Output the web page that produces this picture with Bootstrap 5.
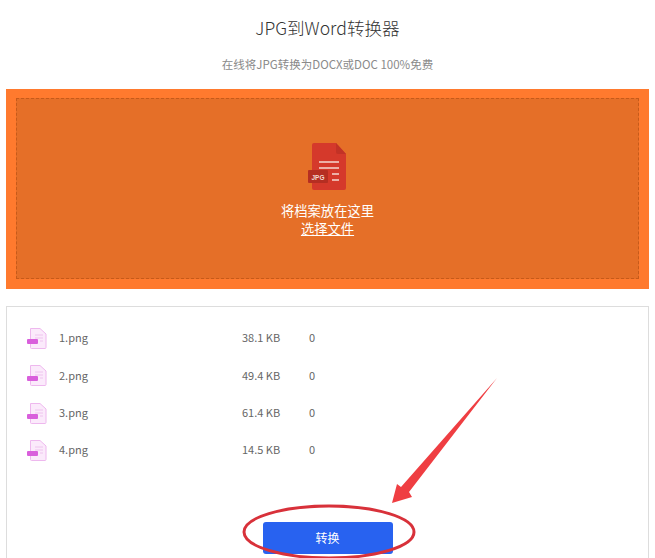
<!DOCTYPE html>
<html lang="zh-CN">
<head>
  <meta charset="UTF-8">
  <title>JPG到Word转换器</title>
  <link href="https://cdn.jsdelivr.net/npm/bootstrap@5.3.3/dist/css/bootstrap.min.css" rel="stylesheet">
  <style>
    html, body { height: 558px; overflow: hidden; }
    body { font-family: "Noto Sans CJK SC", "Noto Sans", sans-serif; background: #fff; color: #555; position: relative; }
    .page-wrap { padding: 0 6px; }
    .tool-title { font-size: 17.6px; line-height: 26px; font-weight: 300; color: #333; margin: 0; padding-top: 15px; }
    .tool-sub { font-size: 11.5px; line-height: 18px; color: #8a8a8a; margin: 0; padding-top: 14px; padding-bottom: 16px; }
    .drop-outer { background: #ff7a2e; height: 200px; padding: 9px 10px 10px; }
    .drop-inner { background: #e56f28; height: 100%; border: 1px dashed #c65a1a; color: #fff; padding-top: 43px; font-size: 13.3px; line-height: 18px; }
    .drop-inner svg { display: block; margin: 0 auto 10px; }
    .pick-file { color: #fff; text-decoration: underline; }
    .file-box { margin-top: 17px; border: 1px solid #ddd; border-bottom: 0; height: 252px; padding-top: 12px; }
    .file-row { height: 37.3px; font-size: 11px; padding-left: 20px; color: #666; }
    .f-icon { width: 32px; padding-top: 2px; }
    .f-name { width: 183px; }
    .f-size { width: 67px; }
    .go-btn { width: 130px; height: 32px; background: #2862f0; border: 0; border-radius: 3px; color: #fff; font-size: 12px; padding: 0; }
    .go-wrap { margin-top: 54px; }
    .mark-layer { position: absolute; left: 0; top: 0; pointer-events: none; }
  </style>
</head>
<body>
<div class="page-wrap">
  <div class="text-center">
    <h1 class="tool-title">JPG到Word转换器</h1>
    <p class="tool-sub">在线将JPG转换为DOCX或DOC 100%免费</p>
  </div>

  <div class="drop-outer">
    <div class="drop-inner text-center">
      <svg width="40" height="50" viewBox="0 0 40 50">
        <path d="M6 1H28L38 12V46Q38 48 36 48H6Q4 48 4 46V3Q4 1 6 1Z" fill="#d5392b"/>
        <path d="M28 1L38 12H30Q28 12 28 10Z" fill="#c23226"/>
        <rect x="0" y="28" width="20" height="13" rx="1" fill="#b52e22"/>
        <text x="10" y="38" font-size="6.5" font-weight="700" fill="#f3d9d0" text-anchor="middle" font-family="Liberation Sans, sans-serif">JPG</text>
        <path d="M11 20H31M11 26H31M24 32H31M24 38H31" stroke="#f5d8cf" stroke-width="1.3"/>
      </svg>
      <div>将档案放在这里</div>
      <div><a href="#" class="pick-file">选择文件</a></div>
    </div>
  </div>

  <div class="file-box">
    <div class="file-row d-flex align-items-center">
      <span class="f-icon"><svg width="20" height="21" viewBox="0 0 20 21"><path d="M3.5 .5H13L19 6V19.5Q19 20.5 18 20.5H4.500Q3.500 20.500 3.500 19.500Z" fill="#fbeafb" stroke="#eeb8ee"/><path d="M8 7H16M8 10H16M13 13H16" stroke="#eec4ee"/><rect x="0" y="11" width="11" height="5" rx="1" fill="#d95fdc"/></svg></span>
      <span class="f-name">1.png</span><span class="f-size">38.1 KB</span><span>0</span>
    </div>
    <div class="file-row d-flex align-items-center">
      <span class="f-icon"><svg width="20" height="21" viewBox="0 0 20 21"><path d="M3.5 .5H13L19 6V19.5Q19 20.5 18 20.5H4.500Q3.500 20.500 3.500 19.500Z" fill="#fbeafb" stroke="#eeb8ee"/><path d="M8 7H16M8 10H16M13 13H16" stroke="#eec4ee"/><rect x="0" y="11" width="11" height="5" rx="1" fill="#d95fdc"/></svg></span>
      <span class="f-name">2.png</span><span class="f-size">49.4 KB</span><span>0</span>
    </div>
    <div class="file-row d-flex align-items-center">
      <span class="f-icon"><svg width="20" height="21" viewBox="0 0 20 21"><path d="M3.5 .5H13L19 6V19.5Q19 20.5 18 20.5H4.500Q3.500 20.500 3.500 19.500Z" fill="#fbeafb" stroke="#eeb8ee"/><path d="M8 7H16M8 10H16M13 13H16" stroke="#eec4ee"/><rect x="0" y="11" width="11" height="5" rx="1" fill="#d95fdc"/></svg></span>
      <span class="f-name">3.png</span><span class="f-size">61.4 KB</span><span>0</span>
    </div>
    <div class="file-row d-flex align-items-center">
      <span class="f-icon"><svg width="20" height="21" viewBox="0 0 20 21"><path d="M3.5 .5H13L19 6V19.5Q19 20.5 18 20.5H4.500Q3.500 20.500 3.500 19.500Z" fill="#fbeafb" stroke="#eeb8ee"/><path d="M8 7H16M8 10H16M13 13H16" stroke="#eec4ee"/><rect x="0" y="11" width="11" height="5" rx="1" fill="#d95fdc"/></svg></span>
      <span class="f-name">4.png</span><span class="f-size">14.5 KB</span><span>0</span>
    </div>
    <div class="go-wrap text-center">
      <button type="button" class="btn go-btn">转换</button>
    </div>
  </div>
</div>

<!-- red annotation drawn over the page -->
<svg class="mark-layer" width="655" height="558" viewBox="0 0 655 558">
  <ellipse cx="329" cy="532" rx="85" ry="26" fill="none" stroke="#d8313a" stroke-width="3"/>
  <polygon points="497,378 409,492 412,497 392,503 397,484 401,487" fill="#ef3e42"/>
</svg>
<script src="https://cdn.jsdelivr.net/npm/bootstrap@5.3.3/dist/js/bootstrap.bundle.min.js"></script>
</body>
</html>
